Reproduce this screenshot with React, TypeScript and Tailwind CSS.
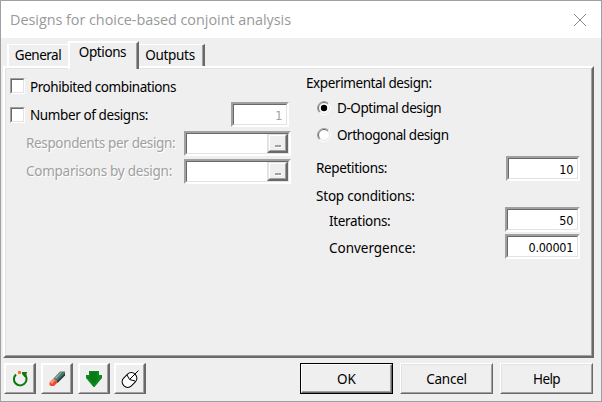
import React from 'react';
import clsx from 'clsx';

type FieldProps = {
  value?: string;
  className?: string;
  disabled?: boolean;
  picker?: boolean;
};

function Field({ value, className, disabled, picker }: FieldProps) {
  return (
    <div
      className={clsx(
        'shrink-0 border-2 border-t-[#a0a0a0] border-l-[#a0a0a0] border-r-white border-b-white',
        className,
      )}
    >
      <div className="flex h-full items-center justify-end border border-t-[#696969] border-l-[#696969] border-r-[#e3e3e3] border-b-[#e3e3e3] bg-white">
        {value && (
          <span
            className={clsx(
              'pt-[3px] pr-[4px] font-["DejaVu_Sans_Condensed","DejaVu_Sans",sans-serif] text-[12.5px] leading-none tracking-[-0.3px] whitespace-nowrap',
              disabled ? 'text-[#a0a0a0]' : 'text-black',
            )}
          >
            {value}
          </span>
        )}
        {picker && (
          <div className="h-full w-[21px] border-t border-r-2 border-b-2 border-l-2 border-t-[#e3e3e3] border-r-[#696969] border-b-[#696969] border-l-[#e3e3e3] bg-[#efefef]">
            <div className="flex h-full items-end justify-center border border-t-white border-l-white border-r-[#a0a0a0] border-b-[#a0a0a0] pb-[3px]">
              <div className="h-[2px] w-[6px] bg-[#a0a0a0] shadow-[1px_1px_0_white]" />
            </div>
          </div>
        )}
      </div>
    </div>
  );
}

function Checkbox() {
  return (
    <div className="h-[16px] w-[15px] shrink-0 border border-t-[#a0a0a0] border-l-[#a0a0a0] border-r-white border-b-white">
      <div className="h-full border border-t-[#696969] border-l-[#696969] border-r-[#e3e3e3] border-b-[#e3e3e3] bg-white" />
    </div>
  );
}

function Radio({ checked }: { checked?: boolean }) {
  return (
    <svg width="14" height="14" viewBox="0 0 14 14" className="shrink-0">
      <circle cx="7" cy="7" r="6" fill="#fff" />
      <path d="M2.4 11.6A6.5 6.5 0 0 1 11.6 2.4" fill="none" stroke="#a0a0a0" />
      <path d="M3.1 10.9A5.5 5.5 0 0 1 10.9 3.1" fill="none" stroke="#696969" />
      <path d="M11.6 2.4A6.5 6.5 0 0 1 2.4 11.6" fill="none" stroke="#fff" />
      <path d="M10.9 3.1A5.5 5.5 0 0 1 3.1 10.9" fill="none" stroke="#e3e3e3" />
      {checked && <circle cx="7" cy="7" r="3.2" fill="#000" />}
    </svg>
  );
}

function Label({ className, children }: { className?: string; children: React.ReactNode }) {
  return (
    <span className={clsx('leading-none whitespace-nowrap', className)}>{children}</span>
  );
}

function IconButton({ className, children }: { className?: string; children: React.ReactNode }) {
  return (
    <button
      className={clsx(
        'h-[31px] w-[32px] shrink-0 border border-t-white border-r-2 border-l-white border-r-[#696969] border-b-[#696969]',
        className,
      )}
    >
      <span className="flex h-full items-center justify-center border border-t-white border-l-white border-r-[#a0a0a0] border-b-[#a0a0a0]">
        {children}
      </span>
    </button>
  );
}

function PushButton({ primary, className, children }: { primary?: boolean; className?: string; children: React.ReactNode }) {
  return (
    <button
      className={clsx(
        'h-[31px] w-[93px] shrink-0 border',
        primary
          ? 'border-black'
          : 'border-t-white border-l-white border-r-[#696969] border-b-[#696969]',
        className,
      )}
    >
      <span
        className={clsx(
          'flex h-full items-center justify-center border',
          primary
            ? 'border-t-white border-l-white border-r-[#696969] border-b-[#696969] shadow-[inset_-1px_-1px_0_#a0a0a0]'
            : 'border-t-[#e3e3e3] border-l-[#e3e3e3] border-r-[#a0a0a0] border-b-[#a0a0a0]',
        )}
      >
        {children}
      </span>
    </button>
  );
}

export default function App() {
  return (
    <div className="flex h-[402px] w-[602px] flex-col border border-[#a0a0a0] bg-[#efefef] font-['Noto_Sans',sans-serif] text-[13.5px] text-black">
      {/* Title bar */}
      <header className="flex h-[37px] shrink-0 items-center justify-between bg-white pr-[15px] pl-[9px]">
        <h1 className="pt-[2px] font-['Open_Sans',sans-serif] text-[14.4px] leading-none tracking-[-0.03px] whitespace-nowrap text-[#999999]">
          Designs for choice-based conjoint analysis
        </h1>
        <svg width="12" height="12" viewBox="0 0 12 12" stroke="#888" strokeWidth="1">
          <path d="M0 0L12 12M12 0L0 12" />
        </svg>
      </header>

      {/* Tabs */}
      <nav className="flex h-[28px] shrink-0 items-end pl-[6px]">
        <div className="flex h-[22px] w-[61px] items-center justify-center border-t border-l-2 border-white pr-px">
          <Label className="tracking-[-0.5px]">General</Label>
        </div>
        <div className="relative z-10 -mb-[3px] flex h-[28px] w-[71px] items-center justify-center border-t-2 border-r-2 border-l-2 border-t-white border-r-[#696969] border-l-white bg-[#efefef] pr-[2px] pb-[7px] shadow-[inset_-1px_0_0_#a0a0a0]">
          <Label className="tracking-[-0.4px]">Options</Label>
        </div>
        <div className="flex h-[22px] w-[66px] items-center justify-center border-t border-r-2 border-t-white border-r-[#696969] pr-[2px] shadow-[inset_-1px_0_0_#a0a0a0]">
          <Label className="tracking-[-0.3px]">Outputs</Label>
        </div>
      </nav>

      {/* Options page */}
      <main className="ml-[2px] h-[292px] w-[591px] shrink-0 border-2 border-t-white border-r-[#696969] border-b-[#696969] border-l-white">
        <div className="flex h-full border border-t-[#e3e3e3] border-r-[#a0a0a0] border-b-[#a0a0a0] border-l-[#e3e3e3]">
          <section className="w-[300px] shrink-0 pt-[9px] pl-[4px]">
            <div className="flex h-[16px] items-center">
              <Checkbox />
              <Label className="ml-[5px] pt-[4px] tracking-[-0.43px]">Prohibited combinations</Label>
            </div>
            <div className="mt-[8px] flex h-[25px] items-center">
              <Checkbox />
              <Label className="ml-[5px] pt-[2px] tracking-[-0.4px]">Number of designs:</Label>
              <Field value="1" disabled className="ml-auto mr-[17px] h-[25px] w-[58px]" />
            </div>
            <div className="mt-[4px] flex h-[25px] items-center justify-between pr-[15px] pl-[16px] text-[#a0a0a0]">
              <Label className="tracking-[-0.36px] [text-shadow:1px_1px_0_white]">Respondents per design:</Label>
              <Field picker className="h-[25px] w-[107px]" />
            </div>
            <div className="mt-[3px] flex h-[25px] items-center justify-between pr-[15px] pl-[16px] text-[#a0a0a0]">
              <Label className="tracking-[-0.26px] [text-shadow:1px_1px_0_white]">Comparisons by design:</Label>
              <Field picker className="h-[25px] w-[107px]" />
            </div>
          </section>

          <section className="w-[274px] shrink-0 pt-[6px]">
            <div className="flex h-[16px] items-center">
              <Label className="pt-[2px] tracking-[-0.4px]">Experimental design:</Label>
            </div>
            <div className="mt-[9px] flex h-[16px] items-center pl-[11px]">
              <Radio checked />
              <Label className="ml-[6px] pt-[2px] tracking-[-0.43px]">D-Optimal design</Label>
            </div>
            <div className="mt-[11px] flex h-[16px] items-center pl-[11px]">
              <Radio />
              <Label className="ml-[6px] pt-[2px] tracking-[-0.46px]">Orthogonal design</Label>
            </div>
            <div className="mt-[13px] flex h-[25px] items-center justify-between pl-[10px]">
              <Label className="tracking-[-0.35px]">Repetitions:</Label>
              <Field value="10" className="h-[25px] w-[74px]" />
            </div>
            <div className="mt-[7px] flex h-[16px] items-center pl-[10px]">
              <Label className="pt-[2px] tracking-[-0.2px]">Stop conditions:</Label>
            </div>
            <div className="mt-[3px] flex h-[25px] items-center justify-between pl-[23px]">
              <Label className="pt-[5px] tracking-[-0.32px]">Iterations:</Label>
              <Field value="50" className="h-[25px] w-[75px]" />
            </div>
            <div className="mt-[2px] flex h-[25px] items-center justify-between pl-[23px]">
              <Label className="pt-[5px] tracking-[-0.02px]">Convergence:</Label>
              <Field value="0.00001" className="h-[25px] w-[75px]" />
            </div>
          </section>
        </div>
      </main>

      {/* Toolbar and dialog buttons */}
      <footer className="flex pt-[5px] pl-[3px]">
        <IconButton>
          <svg width="18" height="18" viewBox="0 0 18 18">
            <path d="M5 4.4A6.3 6.3 0 1 0 14 5" fill="none" stroke="#0a7a0a" strokeWidth="2" />
            <path d="M11 2H16V3H15.5V7H13.5L11 4Z" fill="#0a7a0a" />
            <path d="M7 1H10V4H7Z" fill="#ff7518" />
          </svg>
        </IconButton>
        <IconButton className="ml-[5px]">
          <svg width="18" height="18" viewBox="0 0 18 18">
            <path d="M5.5 8.5L12 1.5H17V5L9.5 12.5Z" fill="#4c7770" />
            <path d="M7 8L13 2H14L8 9Z" fill="#9cb5b0" />
            <path d="M8.5 11.5L17 3V5.5L9.5 13Z" fill="#263f3c" />
            <path d="M1.5 12.5L5.5 8.5L9.5 12.5L6 16H3L1.5 15Z" fill="#f04a2a" />
            <path d="M2 12.5L5.5 9L7 10.5L4 14Z" fill="#ff9478" />
          </svg>
        </IconButton>
        <IconButton className="ml-[5px]">
          <svg width="18" height="18" viewBox="0 0 18 18">
            <path d="M4 1H14V5H17V8L9.5 17H8.5L1 8V5H4Z" fill="#0c8a20" />
            <path d="M5 2H12V7H14L9 14L3 7H5Z" fill="#087a18" />
          </svg>
        </IconButton>
        <IconButton className="ml-[4px]">
          <svg width="18" height="18" viewBox="0 0 18 18" fill="none" stroke="#000" strokeWidth="1">
            <rect x="0.5" y="4.5" width="16" height="11" rx="5.2" transform="rotate(-45 8.5 10)" fill="#fff" />
            <path d="M6 5L8.5 9.5L14 11" />
            <path d="M9 9L17.5 0.5" />
          </svg>
        </IconButton>
        <PushButton primary className="ml-[154px]">
          <Label className="pt-[2px]">OK</Label>
        </PushButton>
        <PushButton className="ml-[7px]">
          <Label className="pt-[2px] tracking-[-0.25px]">Cancel</Label>
        </PushButton>
        <PushButton className="ml-[7px]">
          <Label className="pt-[2px] tracking-[-0.6px]">Help</Label>
        </PushButton>
      </footer>
    </div>
  );
}
